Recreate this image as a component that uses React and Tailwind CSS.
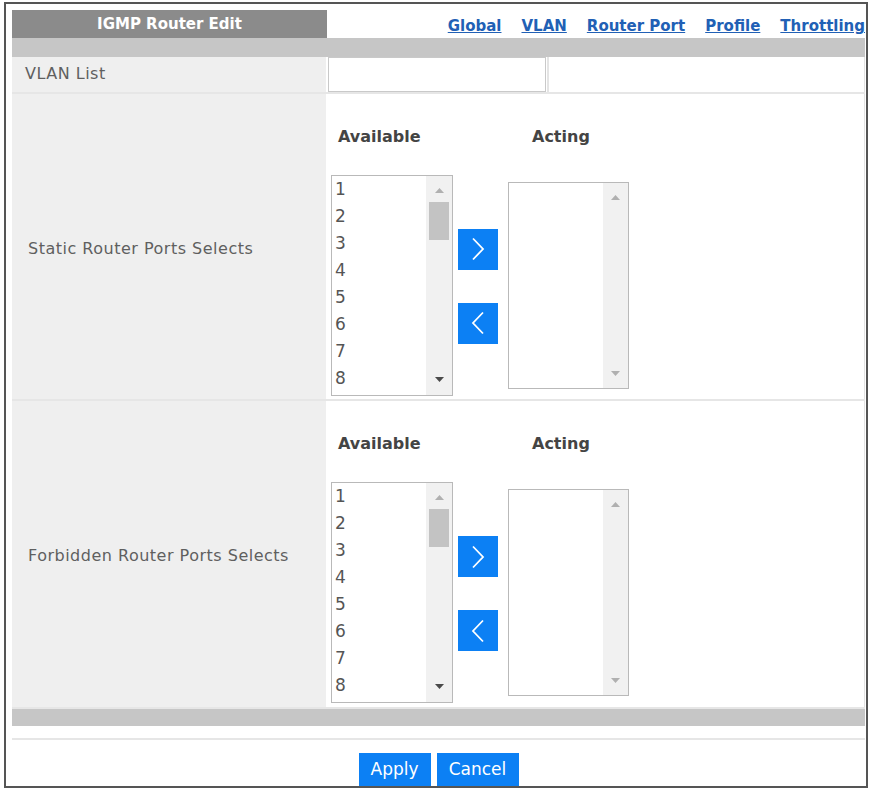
import React from 'react';

const ports = [1, 2, 3, 4, 5, 6, 7, 8];
const font = { fontFamily: '"DejaVu Sans", "Liberation Sans", sans-serif' };

function Chevron({ dir }) {
  return (
    <svg width="16" height="24" viewBox="0 0 16 24" fill="none" stroke="white" strokeWidth="1.8" strokeLinejoin="miter">
      {dir === 'right' ? <path d="M3 1.5l10 10.5-10 10.5" /> : <path d="M13 1.5L3 12l10 10.5" />}
    </svg>
  );
}

function Tri({ up, dark }) {
  return (
    <svg width="9" height="5" viewBox="0 0 9 5">
      <path d={up ? 'M0 5L4.5 0L9 5Z' : 'M0 0L9 0L4.5 5Z'} fill={dark ? '#4a4a4a' : '#b0b0b0'} />
    </svg>
  );
}

function ListBox({ items, filled }) {
  if (filled) {
    return (
      <div className="flex h-[221px] w-[122px] border border-[#b9b9b9] bg-white">
        <div className="flex-1 pl-[3px] text-[17px] leading-[27px] text-[#555]">
          {items.map(n => (
            <div key={n}>{n}</div>
          ))}
        </div>
        <div className="flex w-[26px] flex-col items-center bg-[#f1f1f1]">
          <div className="mt-[12px]"><Tri up /></div>
          <div className="mt-[9px] h-[38px] w-[20px] bg-[#c3c3c3]" />
          <div className="flex-1" />
          <div className="mb-[13px]"><Tri dark /></div>
        </div>
      </div>
    );
  }
  return (
    <div className="flex h-[207px] w-[121px] border border-[#b9b9b9] bg-white">
      <div className="flex-1" />
      <div className="flex w-[25px] flex-col items-center justify-between bg-[#f1f1f1] py-[12px]">
        <Tri up />
        <Tri />
      </div>
    </div>
  );
}

function PortSelect({ label }) {
  return (
    <div className="flex h-[308px] border-b-2 border-[#e6e6e6]">
      <div className="flex w-[314px] items-center bg-[#efefef] pl-[16px] pt-[4px] text-[16px] tracking-[0.5px] text-[#5f5f5f]">{label}</div>
      <div className="ml-[2px] flex-1 border-r border-[#e2e2e2] pl-[3px]">
        <div className="flex h-[81px] items-center pt-[5px] text-[16px] font-bold text-[#444]">
          <span className="ml-[7px] w-[194px]">Available</span>
          <span>Acting</span>
        </div>
        <div className="flex items-start">
          <ListBox items={ports} filled />
          <div className="ml-[5px] mt-[54px] flex flex-col gap-[33px]">
            <button className="flex h-[41px] w-[40px] items-center justify-center bg-[#0c80f4]">
              <Chevron dir="right" />
            </button>
            <button className="flex h-[41px] w-[40px] items-center justify-center bg-[#0c80f4]">
              <Chevron dir="left" />
            </button>
          </div>
          <div className="ml-[10px] mt-[7px]">
            <ListBox />
          </div>
        </div>
      </div>
    </div>
  );
}

export default function App() {
  return (
    <div className="h-[790px] w-[873px] bg-white pl-[4px] pt-[2px]" style={font}>
      <div className="flex h-[786px] w-[864px] flex-col border-2 border-[#555] pl-[6px] pr-[1px] pt-[6px]">
        <div className="flex h-[28px] items-center">
          <div className="flex h-full w-[315px] items-center justify-center bg-[#8b8b8b] text-[15px] font-bold text-white">
            IGMP Router Edit
          </div>
          <div className="flex flex-1 justify-end gap-[20px] pt-[5px] text-[15px] font-bold text-[#2160b5]">
            <a className="underline">Global</a>
            <a className="underline">VLAN</a>
            <a className="underline">Router Port</a>
            <a className="underline">Profile</a>
            <a className="underline">Throttling</a>
          </div>
        </div>
        <div className="h-[19px] bg-[#c6c6c6]" />
        <div className="flex h-[37px] border-b-2 border-[#e6e6e6]">
          <div className="flex w-[314px] items-center bg-[#efefef] pl-[13px] text-[16px] tracking-[0.5px] text-[#5f5f5f]">VLAN List</div>
          <div className="ml-[2px] flex flex-1 border-r border-[#e2e2e2]">
            <input className="h-[35px] w-[218px] border border-[#c9c9c9] bg-white outline-none" />
            <div className="ml-[1px] w-[2px] bg-[#e4e4e4]" />
          </div>
        </div>
        <PortSelect label="Static Router Ports Selects" />
        <PortSelect label="Forbidden Router Ports Selects" />
        <div className="h-[17px] bg-[#c6c6c6]" />
        <div className="mt-[12px] h-[2px] bg-[#e6e6e6]" />
        <div className="mt-[13px] flex justify-center gap-[6px]">
          <button className="h-[33px] w-[72px] bg-[#0c80f4] text-[17px] text-white">Apply</button>
          <button className="h-[33px] w-[82px] bg-[#0c80f4] text-[17px] text-white">Cancel</button>
        </div>
      </div>
    </div>
  );
}
